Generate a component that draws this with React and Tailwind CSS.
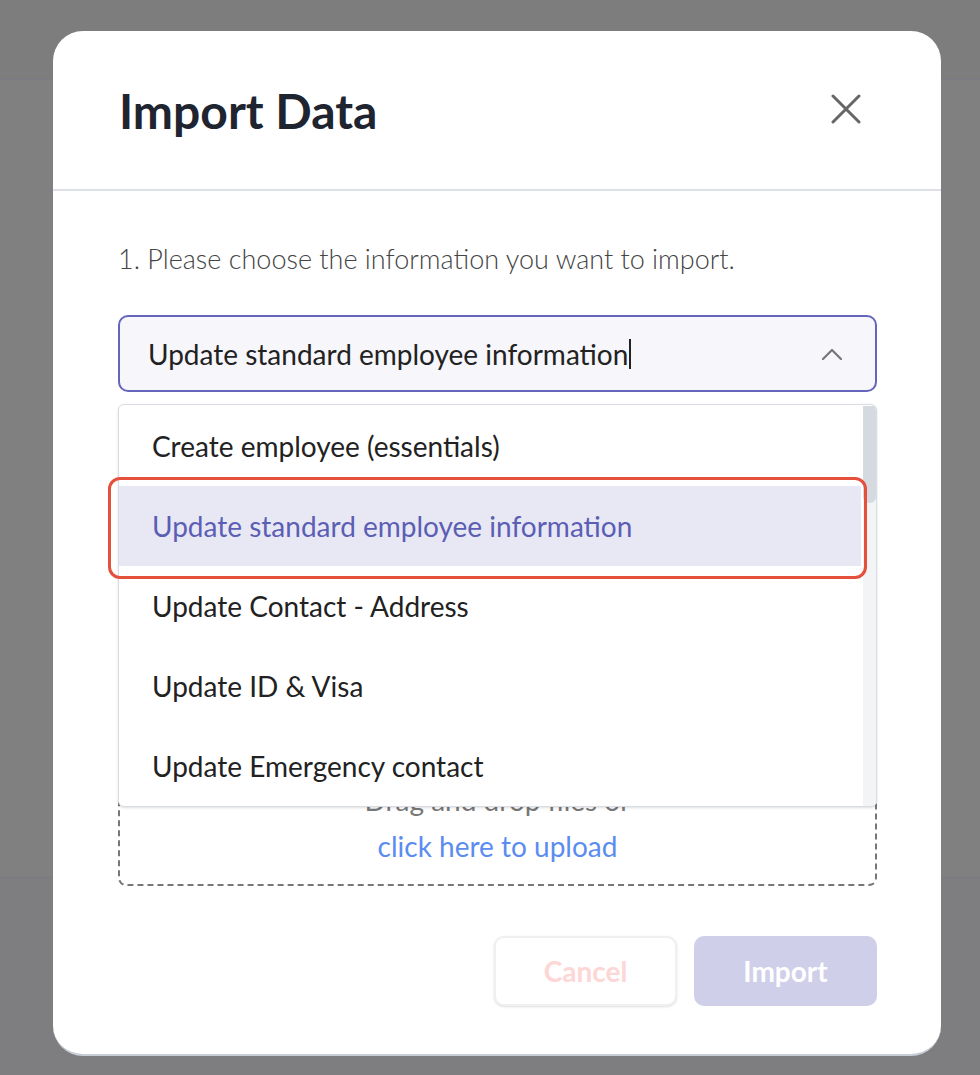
import { useState } from 'react';

const options = [
  'Create employee (essentials)',
  'Update standard employee information',
  'Update Contact - Address',
  'Update ID & Visa',
  'Update Emergency contact',
  'Update Bank details',
];

const ImportDataModal = () => {
  const [selected] = useState(options[1]);

  return (
    <div className="ml-[53px] mt-[31px] w-[888px] h-[1025px] bg-white rounded-[30px] border-b-2 border-[#c9ced6] flex flex-col">
      {/* Header */}
      <div className="h-[160px] shrink-0 pl-[66px] pr-[80px] flex items-center justify-between border-b-2 border-[#dde1e7]">
        <h1 className="text-[48px] font-bold text-[#1f2530] leading-none pt-[2px]">Import Data</h1>
        <button className="text-[#666] -mt-[2px]">
          <svg className="w-[30px] h-[30px]" viewBox="0 0 30 30" fill="none" stroke="currentColor" strokeWidth={3} strokeLinecap="round">
            <path d="M2 2l26 26M28 2L2 28" />
          </svg>
        </button>
      </div>

      {/* Body */}
      <div className="pl-[65px] pr-[64px] flex flex-col">
        <p className="pt-[52px] text-[27px] leading-[32px] font-light text-[#444]">
          1. Please choose the information you want to import.
        </p>

        <div className="relative mt-[40px] shrink-0">
          <div className="h-[77px] rounded-[10px] border-2 border-[#6465bb] bg-[#f6f6fb] pl-[28px] pr-[32px] flex items-center justify-between">
            <span className="text-[28px] text-[#222] flex items-center">
              {selected}
              <span className="inline-block w-[2px] h-[30px] bg-[#222] ml-[1px]"></span>
            </span>
            <svg className="w-[22px] h-[12px] text-[#777]" viewBox="0 0 22 12" fill="none" stroke="currentColor" strokeWidth={2.2} strokeLinecap="round" strokeLinejoin="round">
              <path d="M2 11l9-9 9 9" />
            </svg>
          </div>

          {/* Dropdown menu */}
          <div className="absolute left-0 right-0 top-[89px] z-10 h-[403px] bg-white border border-[#d8dde3] rounded-[6px] shadow-sm flex overflow-hidden pt-[1px]">
            <ul className="flex-1">
              {options.slice(0, 5).map((opt) => (
                <li
                  key={opt}
                  className={`h-[80px] pl-[33px] flex items-center text-[28px] ${
                    opt === selected ? 'bg-[#e8e8f4] text-[#5b5eb4]' : 'text-[#222]'
                  }`}
                >
                  {opt}
                </li>
              ))}
            </ul>
            <div className="w-[13px] ml-[2px] bg-[#f3f4f6]">
              <div className="h-[97px] bg-[#d5dae1] rounded-b-[6px]"></div>
            </div>
          </div>

          {/* Highlight annotation */}
          <div className="absolute left-[-10px] top-[162px] w-[759px] h-[102px] z-20 border-[3px] border-[#e4503c] rounded-[12px] pointer-events-none"></div>
        </div>

        {/* Dropzone */}
        <div className="mt-[26px] h-[468px] shrink-0 border-2 border-dashed border-[#777] rounded-[8px] flex flex-col items-center justify-end pb-[15px]">
          <p className="text-[28px] leading-[46px] text-[#777]">Drag and drop files or</p>
          <p className="text-[28px] leading-[46px] text-[#5b8cf0]">click here to upload</p>
        </div>

        {/* Footer */}
        <div className="mt-[50px] flex justify-end gap-[17px] shrink-0">
          <button className="w-[183px] h-[70px] rounded-[10px] border-2 border-[#f0f0f0] bg-white shadow-sm text-[28px] font-bold text-[#fdd6d6]">
            Cancel
          </button>
          <button className="w-[183px] h-[70px] rounded-[10px] bg-[#d0cfea] text-[28px] font-bold text-white">
            Import
          </button>
        </div>
      </div>
    </div>
  );
};

export default function App() {
  return (
    <div className="min-h-[1075px] bg-[#808080] relative overflow-hidden" style={{ fontFamily: 'Lato, "Noto Sans", sans-serif' }}>
      <div className="absolute inset-x-0 top-0 h-[80px] bg-[#7d7d7d] border-b border-[#7a7b82]"></div>
      <div className="absolute inset-x-0 top-[877px] h-[198px] bg-[#7e7e80] border-t border-[#7a7b82]"></div>
      <div className="relative pt-px -mt-px">
        <ImportDataModal />
      </div>
    </div>
  );
}
